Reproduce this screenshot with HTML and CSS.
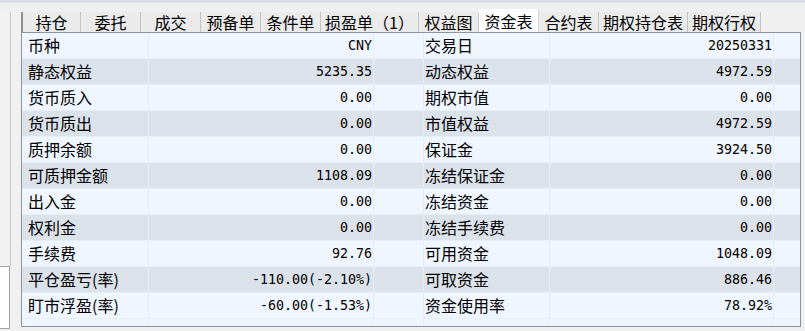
FILE: index.html
```html
<!DOCTYPE html>
<html lang="zh">
<head>
<meta charset="utf-8">
<link rel="stylesheet" href="styles.css">
</head>
<body>
<div class="topband"></div>
<div class="wrap">
  <div class="side">
    <div class="side-line"></div>
    <div class="side-box"></div>
  </div>
  <div class="main">
    <div class="tabs">
      <div class="tab first">持仓</div>
      <div class="tab">委托</div>
      <div class="tab">成交</div>
      <div class="tab">预备单</div>
      <div class="tab">条件单</div>
      <div class="tab">损盈单（1）</div>
      <div class="tab">权益图</div>
      <div class="tab active">资金表</div>
      <div class="tab">合约表</div>
      <div class="tab">期权持仓表</div>
      <div class="tab">期权行权</div>
    </div>
    <div class="panel">
      <div class="row light"><div class="c l1">币种</div><div class="c v">CNY</div><div class="c"></div><div class="c l2">交易日</div><div class="c v">20250331</div><div class="c e"></div></div>
      <div class="row dark"><div class="c l1">静态权益</div><div class="c v">5235.35</div><div class="c"></div><div class="c l2">动态权益</div><div class="c v">4972.59</div><div class="c e"></div></div>
      <div class="row light"><div class="c l1">货币质入</div><div class="c v">0.00</div><div class="c"></div><div class="c l2">期权市值</div><div class="c v">0.00</div><div class="c e"></div></div>
      <div class="row dark"><div class="c l1">货币质出</div><div class="c v">0.00</div><div class="c"></div><div class="c l2">市值权益</div><div class="c v">4972.59</div><div class="c e"></div></div>
      <div class="row light"><div class="c l1">质押余额</div><div class="c v">0.00</div><div class="c"></div><div class="c l2">保证金</div><div class="c v">3924.50</div><div class="c e"></div></div>
      <div class="row dark"><div class="c l1">可质押金额</div><div class="c v">1108.09</div><div class="c"></div><div class="c l2">冻结保证金</div><div class="c v">0.00</div><div class="c e"></div></div>
      <div class="row light"><div class="c l1">出入金</div><div class="c v">0.00</div><div class="c"></div><div class="c l2">冻结资金</div><div class="c v">0.00</div><div class="c e"></div></div>
      <div class="row dark"><div class="c l1">权利金</div><div class="c v">0.00</div><div class="c"></div><div class="c l2">冻结手续费</div><div class="c v">0.00</div><div class="c e"></div></div>
      <div class="row light"><div class="c l1">手续费</div><div class="c v">92.76</div><div class="c"></div><div class="c l2">可用资金</div><div class="c v">1048.09</div><div class="c e"></div></div>
      <div class="row dark"><div class="c l1">平仓盈亏(率)</div><div class="c v">-110.00(-2.10%)</div><div class="c"></div><div class="c l2">可取资金</div><div class="c v">886.46</div><div class="c e"></div></div>
      <div class="row light"><div class="c l1">盯市浮盈(率)</div><div class="c v">-60.00(-1.53%)</div><div class="c"></div><div class="c l2">资金使用率</div><div class="c v">78.92%</div><div class="c e"></div></div>
      <div class="row filler"><div class="c"></div><div class="c"></div><div class="c"></div><div class="c"></div><div class="c"></div><div class="c e"></div></div>
    </div>
  </div>
</div>
</body>
</html>
```

FILE: styles.css
```css
* { box-sizing: border-box; }
html, body { margin: 0; padding: 0; }
body {
  width: 805px;
  height: 331px;
  overflow: hidden;
  background: #f0f0f0;
  font-family: "Noto Sans CJK SC", "Noto Sans", sans-serif;
  font-size: 16px;
  color: #000;
}
.topband {
  height: 3px;
  background: #d9dee8;
}
.wrap {
  display: flex;
  height: 328px;
}
.side {
  width: 21px;
  display: flex;
  flex-direction: column;
  flex-shrink: 0;
}
.side-line {
  margin-top: 9px;
  width: 11px;
  height: 254px;
  border-right: 1px solid #c9c9c9;
  background: #f2f2f2;
}
.side-box {
  width: 10px;
  height: 63px;
  background: #ffffff;
  border: 1px solid #a4a4a4;
  border-left: none;
}
.main {
  width: 779px;
  display: flex;
  flex-direction: column;
}
.tabs {
  display: flex;
  align-items: flex-end;
  height: 29px;
  padding-top: 6px;
}
.tab {
  height: 20px;
  min-width: 60px;
  padding: 0 4px;
  line-height: 20px;
  text-align: center;
  background: #ebebeb;
  border-right: 1px solid #c4c4c4;
  white-space: nowrap;
  font-size: 16px;
}
.tab.first {
  border-left: 2px solid #8d8d8d;
}
.tab.active {
  height: 23px;
  line-height: 25px;
  background: #ffffff;
  border-right: 1px solid #d4d4d4;
}
.panel {
  width: 780px;
  height: 295px;
  border: 1px solid #8a95a2;
  background: #f0f6ff;
  display: flex;
  flex-direction: column;
}
.row {
  display: grid;
  grid-template-columns: 127px 225px 50px 126px 224px 1fr;
  height: 26px;
  border-bottom: 1px solid #e8eef5;
}
.row.light { background: #f0f6ff; }
.row.dark { background: #dce2ea; }
.row.filler {
  height: 7px;
  border-bottom: none;
  background: #f0f6ff;
}
.c {
  border-right: 1px solid #e6ecf3;
  line-height: 25px;
  white-space: nowrap;
  overflow: hidden;
}
.c.e { border-right: none; }
.l1 { padding-left: 6px; }
.l2 { padding-left: 1px; }
.v {
  text-align: right;
  padding-right: 1px;
  font-family: "DejaVu Sans Mono", "Liberation Mono", monospace;
  font-size: 13.3px;
}
```
